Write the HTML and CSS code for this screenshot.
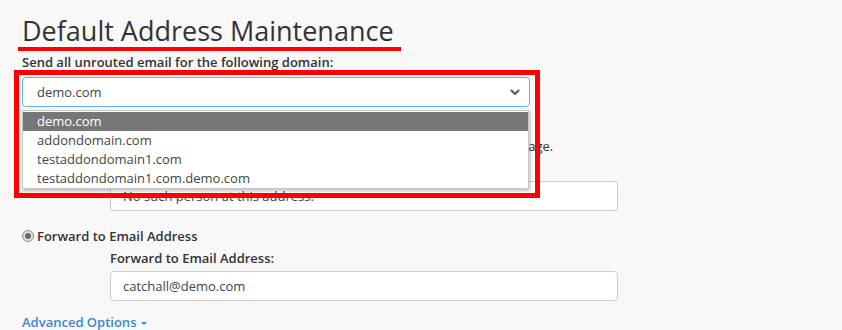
FILE: index.html
```html
<!DOCTYPE html>
<html lang="en">
<head>
<meta charset="utf-8">
<title>Default Address Maintenance</title>
<link rel="stylesheet" href="styles.css">
</head>
<body>
<div class="page">
  <h1 class="title">Default Address Maintenance</h1>
  <div class="title-mark"></div>

  <div class="field-label">Send all unrouted email for the following domain:</div>
  <div class="select">
    <span class="select-value">demo.com</span>
    <svg class="chevron" width="10" height="6" viewBox="0 0 10 6"><path d="M1 1 L5 5 L9 1" fill="none" stroke="#555" stroke-width="2"/></svg>
  </div>

  <div class="field-label current">Current Settings:</div>
  <div class="radio-row">
    <span class="radio"></span>
    <span class="radio-text">Discard the email while your server processes it by SMTP time with an error message.</span>
  </div>
  <div class="sub-group">
    <div class="field-label">Failure Message (seen by sender):</div>
    <div class="input">No such person at this address.</div>
  </div>

  <div class="radio-row second">
    <span class="radio checked"></span>
    <span class="radio-label">Forward to Email Address</span>
  </div>
  <div class="sub-group">
    <div class="field-label">Forward to Email Address:</div>
    <div class="input">catchall@demo.com</div>
  </div>

  <a class="advanced" href="#">Advanced Options <span class="caret"></span></a>

  <ul class="dropdown">
    <li class="active">demo.com</li>
    <li>addondomain.com</li>
    <li>testaddondomain1.com</li>
    <li>testaddondomain1.com.demo.com</li>
  </ul>
  <div class="highlight-box"></div>
</div>
</body>
</html>
```

FILE: styles.css
```css
html, body {
  margin: 0;
  padding: 0;
  background: #f8f8f8;
}

body {
  font-family: "Open Sans", "Liberation Sans", sans-serif;
  font-size: 13px;
  color: #333;
}

.page {
  position: relative;
  padding: 15px 22px 0 22px;
}

.title {
  margin: 0;
  font-size: 27px;
  font-weight: 400;
  line-height: 32px;
  color: #333;
}

.title-mark {
  margin-left: -4px;
  width: 383px;
  height: 4px;
  background: #f00;
}

.field-label {
  font-weight: 600;
  line-height: 18px;
  margin-top: 2px;
}

.select {
  margin-top: 6px;
  width: 508px;
  height: 30px;
  box-sizing: border-box;
  border: 1px solid #66afe9;
  border-radius: 4px;
  background: #fff;
  display: flex;
  align-items: center;
  justify-content: space-between;
  padding: 0 9px 0 14px;
}

.select-value {
  line-height: 18px;
  color: #444;
}

.field-label.current {
  margin-top: 0;
}

.radio-row {
  display: flex;
  align-items: center;
  gap: 3px;
  margin-top: 12px;
  line-height: 18px;
}

.radio-row.second {
  margin-top: 16px;
}

.radio {
  width: 12px;
  height: 12px;
  box-sizing: border-box;
  border-radius: 50%;
  border: 1px solid #8a8a8a;
  background: #e2e2e2;
  position: relative;
}

.radio.checked::after {
  content: "";
  position: absolute;
  left: 2px;
  top: 2px;
  width: 6px;
  height: 6px;
  border-radius: 50%;
  background: #6a6a6a;
}

.radio-label {
  font-weight: 600;
}

.sub-group {
  margin-left: 88px;
  margin-top: 4px;
}

.sub-group .field-label {
  margin-top: 0;
}

.input {
  margin-top: 4px;
  width: 508px;
  height: 30px;
  box-sizing: border-box;
  border: 1px solid #ccc;
  border-radius: 4px;
  background: #fff;
  padding: 0 12px;
  line-height: 28px;
  color: #444;
}

.advanced {
  display: inline-block;
  margin-top: 12px;
  color: #3b87d0;
  font-weight: 600;
  font-size: 13px;
  line-height: 18px;
  text-decoration: none;
}

.caret {
  display: inline-block;
  vertical-align: middle;
  width: 0;
  height: 0;
  border-left: 3px solid transparent;
  border-right: 3px solid transparent;
  border-top: 3px solid #3b87d0;
  margin-left: 1px;
}

.dropdown {
  position: absolute;
  left: 22px;
  top: 110px;
  width: 507px;
  margin: 0;
  padding: 1px 0 0 0;
  list-style: none;
  background: #fff;
  box-sizing: border-box;
  border: 1px solid #c8c8c8;
  box-shadow: 1px 2px 3px rgba(0, 0, 0, 0.25);
}

.dropdown li {
  height: 19px;
  line-height: 19px;
  padding-left: 14px;
  font-size: 13px;
  color: #444;
}

.dropdown li.active {
  background: #777;
  color: #fff;
}

.highlight-box {
  position: absolute;
  left: 14px;
  top: 70px;
  width: 526px;
  height: 128px;
  box-sizing: border-box;
  border: 5px solid #f00;
}
```
